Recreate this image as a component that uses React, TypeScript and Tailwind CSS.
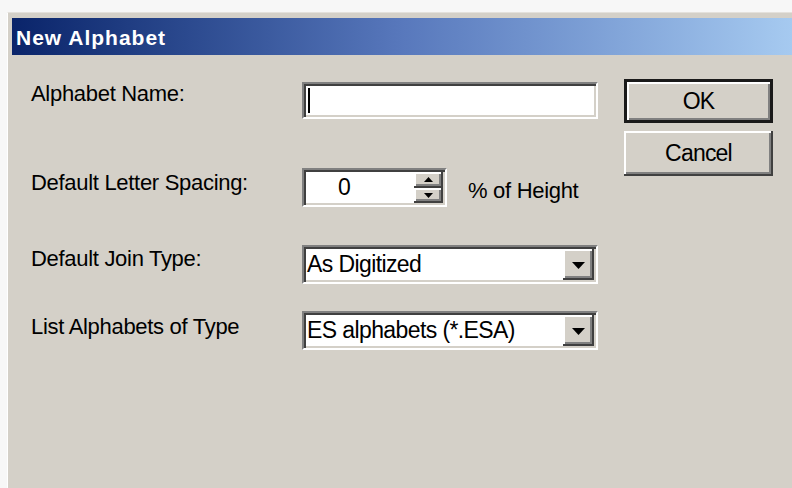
const sunken =
  "border-2 border-t-[#808080] border-l-[#808080] border-b-white border-r-white bg-white p-[2px] shadow-[inset_2px_2px_0_#404040,inset_-2px_-2px_0_#d4d0c8]";
const raised =
  "bg-[#d4d0c8] shadow-[inset_-2px_-2px_0_#404040,inset_2px_2px_0_#ffffff,inset_-4px_-4px_0_#808080]";

function Arrow({ up, size = 13 }: { up?: boolean; size?: number }) {
  const h = Math.ceil(size / 2);
  return (
    <svg width={size} height={h} viewBox={`0 0 ${size} ${h}`} className="block">
      {up ? (
        <polygon points={`0,${h} ${size},${h} ${size / 2},0`} fill="#000" />
      ) : (
        <polygon points={`0,0 ${size},0 ${size / 2},${h}`} fill="#000" />
      )}
    </svg>
  );
}

function Combo({ value }: { value: string }) {
  return (
    <div className={`${sunken} flex h-[39px] w-[296px]`}>
      <div className="flex flex-1 items-center pl-[1px] text-[23px] leading-none tracking-[-0.6px] text-black">
        {value}
      </div>
      <div className={`${raised} flex w-[31px] items-center justify-center pt-[2px]`}>
        <Arrow size={13} />
      </div>
    </div>
  );
}

function Label({ text, offset }: { text: string; offset: string }) {
  return (
    <div className={`w-[271px] shrink-0 text-[22px] leading-none tracking-[-0.3px] text-black ${offset}`}>
      {text}
    </div>
  );
}

export default function App() {
  return (
    <div className="h-[488px] w-[792px] overflow-hidden bg-[#f7f7f7] pl-[7px] pt-[12px] font-['Liberation_Sans',Arial,sans-serif]">
      <div className="h-full border-l border-t border-l-white border-t-[#e4e1dc] bg-[#d4d0c8] pl-[4px] pt-[5px]">
        {/* caption bar */}
        <div className="flex h-[37px] items-center bg-gradient-to-r from-[#0a246a] via-[#5878bc] to-[#a6caf0] pl-[4px] pt-[2px]">
          <span className="text-[21px] font-bold leading-none tracking-[1px] text-white">New Alphabet</span>
        </div>

        <div className="flex pl-[19px]">
          {/* fields */}
          <div className="flex flex-col">
            <div className="mt-[27px] flex items-start">
              <Label text="Alphabet Name:" offset="mt-[1px]" />
              <div className={`${sunken} flex h-[37px] w-[296px] items-center pl-[4px]`}>
                <div className="h-[25px] w-[2px] bg-black" />
              </div>
            </div>

            <div className="mt-[49px] flex items-start">
              <Label text="Default Letter Spacing:" offset="mt-[4px]" />
              <div className={`${sunken} flex h-[39px] w-[145px]`}>
                <div className="flex flex-1 items-center pl-[32px] text-[23px] leading-none text-black">0</div>
                <div className="flex w-[29px] flex-col">
                  <div className={`${raised} flex flex-1 items-center justify-center pb-[1px]`}>
                    <Arrow up size={9} />
                  </div>
                  <div className={`${raised} flex flex-1 items-center justify-center pt-[1px]`}>
                    <Arrow size={9} />
                  </div>
                </div>
              </div>
              <div className="ml-[21px] mt-[12px] text-[22px] leading-none tracking-[-0.3px] text-black">% of Height</div>
            </div>

            <div className="mt-[38px] flex items-start">
              <Label text="Default Join Type:" offset="mt-[3px]" />
              <Combo value="As Digitized" />
            </div>

            <div className="mt-[27px] flex items-start">
              <Label text="List Alphabets of Type" offset="mt-[5px]" />
              <Combo value="ES alphabets (*.ESA)" />
            </div>
          </div>

          {/* buttons */}
          <div className="ml-[26px] mt-[24px] flex w-[149px] flex-col gap-[8px]">
            <div className="flex h-[44px] items-center justify-center border-[3px] border-[#1a1a1a] bg-[#d4d0c8] text-[23px] leading-none tracking-[-0.8px] text-black shadow-[inset_2px_2px_0_#ffffff,inset_-2px_-2px_0_#808080]">
              OK
            </div>
            <div className={`${raised} flex h-[45px] items-center justify-center text-[23px] leading-none tracking-[-0.8px] text-black`}>
              Cancel
            </div>
          </div>
        </div>
      </div>
    </div>
  );
}
